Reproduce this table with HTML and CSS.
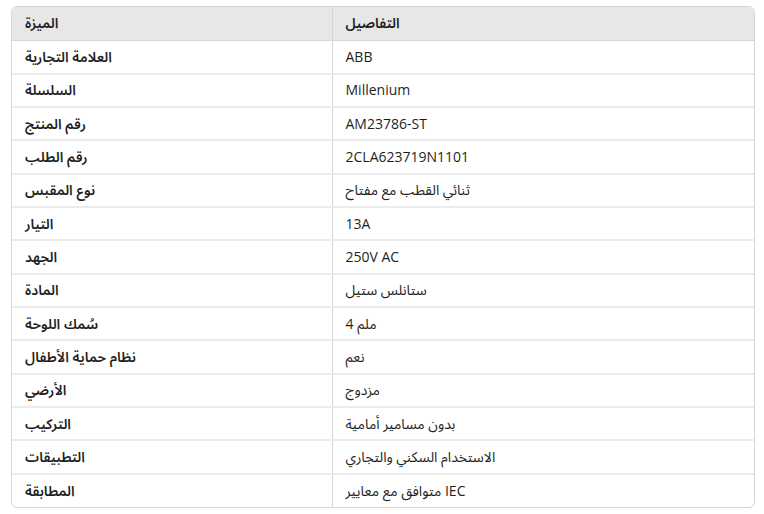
FILE: index.html
```html
<!DOCTYPE html>
<html lang="ar">
<head>
<meta charset="utf-8">
<title>المواصفات</title>
<link rel="stylesheet" href="styles.css">
</head>
<body>
<div class="wrap">
<table class="spec">
<thead>
<tr><th class="c1">الميزة</th><th class="c2">التفاصيل</th></tr>
</thead>
<tbody>
<tr><td class="c1">العلامة التجارية</td><td class="c2">ABB</td></tr>
<tr><td class="c1">السلسلة</td><td class="c2">Millenium</td></tr>
<tr><td class="c1">رقم المنتج</td><td class="c2">AM23786-ST</td></tr>
<tr><td class="c1">رقم الطلب</td><td class="c2">2CLA623719N1101</td></tr>
<tr><td class="c1">نوع المقبس</td><td class="c2">ثنائي القطب مع مفتاح</td></tr>
<tr><td class="c1">التيار</td><td class="c2">13A</td></tr>
<tr><td class="c1">الجهد</td><td class="c2">250V AC</td></tr>
<tr><td class="c1">المادة</td><td class="c2">ستانلس ستيل</td></tr>
<tr><td class="c1">سُمك اللوحة</td><td class="c2">4 ملم</td></tr>
<tr><td class="c1">نظام حماية الأطفال</td><td class="c2">نعم</td></tr>
<tr><td class="c1">الأرضي</td><td class="c2">مزدوج</td></tr>
<tr><td class="c1">التركيب</td><td class="c2">بدون مسامير أمامية</td></tr>
<tr><td class="c1">التطبيقات</td><td class="c2">الاستخدام السكني والتجاري</td></tr>
<tr><td class="c1">المطابقة</td><td class="c2">متوافق مع معايير IEC</td></tr>
</tbody>
</table>
</div>
</body>
</html>
```
FILE: styles.css
```css
html, body {
  margin: 0;
  padding: 0;
  background: #ffffff;
}
body {
  padding: 6px 9px 0 11px;
  font-family: "Open Sans", "Noto Sans Arabic", "DejaVu Sans", sans-serif;
  font-size: 14px;
  color: #1f1f1f;
}
.wrap {
  width: 742px;
  border: 1px solid #d6d6d6;
  border-radius: 6px;
  overflow: hidden;
}
.spec {
  width: 100%;
  border-collapse: collapse;
  direction: ltr;
}
.spec th, .spec td {
  height: 33.35px;
  padding: 0 13px;
  text-align: left;
  vertical-align: middle;
  box-sizing: border-box;
  line-height: 18px;
}
.spec th {
  background: #e7e7e7;
  font-weight: 600;
  border-bottom: 1px solid #d6d6d6;
}
.spec td {
  border-top: 2px solid #ececec;
}
.spec tbody tr:first-child td {
  border-top: none;
}
.spec .c1 {
  width: 320px;
  border-right: 1px solid #d6d6d6;
}
.spec td.c1 {
  font-weight: 600;
}
.spec td.c2 {
  font-weight: 400;
}
```
